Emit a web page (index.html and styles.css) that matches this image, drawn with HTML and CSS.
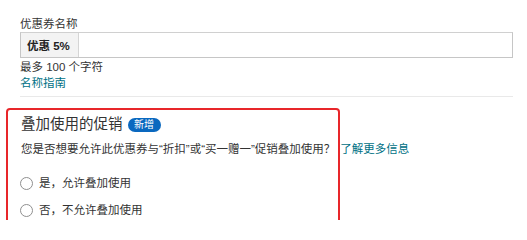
FILE: index.html
```html
<!DOCTYPE html>
<html lang="zh-CN">
<head>
<meta charset="utf-8">
<link rel="stylesheet" href="styles.css">
</head>
<body>
<div class="page">
  <div class="field">
    <div class="label">优惠券名称</div>
    <div class="input">
      <span class="prefix">优惠 5%</span>
      <span class="input-rest"></span>
    </div>
    <div class="hint">最多 100 个字符</div>
    <a class="link" href="#">名称指南</a>
  </div>
  <div class="divider"></div>
  <div class="section">
    <div class="highlight"></div>
    <div class="title-row">
      <span class="title">叠加使用的促销</span>
      <span class="badge">新增</span>
    </div>
    <div class="question">您是否想要允许此优惠券与“折扣”或“买一赠一”促销叠加使用？<a class="link q-link" href="#">了解更多信息</a></div>
    <div class="options">
      <label class="option"><span class="radio"></span><span>是，允许叠加使用</span></label>
      <label class="option"><span class="radio"></span><span>否，不允许叠加使用</span></label>
    </div>
  </div>
</div>
</body>
</html>
```
FILE: styles.css
```css
html, body {
  margin: 0;
  padding: 0;
  background: #ffffff;
}
body {
  font-family: "Liberation Sans", "Noto Sans CJK SC", sans-serif;
  font-size: 11.5px;
  color: #333333;
}
.page {
  padding: 17px 14px 0 20px;
  width: 493px;
}
.field {
  display: flex;
  flex-direction: column;
}
.label {
  line-height: 15px;
}
.input {
  display: flex;
  height: 26px;
  box-sizing: border-box;
  border: 1px solid #c6c6c6;
  border-top-color: #d0d0d0;
}
.prefix {
  display: flex;
  align-items: center;
  width: 58px;
  padding-left: 6px;
  box-sizing: border-box;
  background: #f3f3f3;
  border-right: 1px solid #d5d5d5;
  font-weight: bold;
  color: #222;
}
.input-rest {
  flex: 1;
}
.hint {
  margin-top: 1px;
  line-height: 16px;
}
.link {
  color: #007185;
  text-decoration: none;
  line-height: 16px;
}
.divider {
  margin-top: 5px;
  height: 1px;
  background: #e9e9e9;
}
.section {
  position: relative;
  margin-top: 11px;
  padding-top: 6px;
  padding-left: 1px;
}
.highlight {
  position: absolute;
  left: -14px;
  top: 0;
  width: 334px;
  height: 116px;
  box-sizing: border-box;
  border: 2px solid #e8262a;
  border-radius: 4px;
  pointer-events: none;
}
.title-row {
  display: flex;
  align-items: center;
  gap: 5px;
  height: 20px;
}
.title {
  font-size: 14.5px;
  line-height: 20px;
  color: #333;
}
.badge {
  display: inline-flex;
  align-items: center;
  justify-content: center;
  width: 33px;
  height: 14px;
  margin-top: 2px;
  border-radius: 7px;
  background: #0a68bf;
  color: #ffffff;
  font-size: 10px;
  line-height: 14px;
}
.question {
  margin-top: 7px;
  line-height: 16px;
  white-space: nowrap;
}
.q-link {
  margin-left: 5px;
}
.options {
  margin-top: 16px;
  display: flex;
  flex-direction: column;
  gap: 7px;
}
.option {
  display: flex;
  align-items: center;
  gap: 6px;
  height: 20px;
  line-height: 20px;
}
.radio {
  width: 13px;
  height: 13px;
  box-sizing: border-box;
  border: 1px solid #8f8f8f;
  border-radius: 50%;
  background: #fff;
  margin-left: -1px;
}
```
